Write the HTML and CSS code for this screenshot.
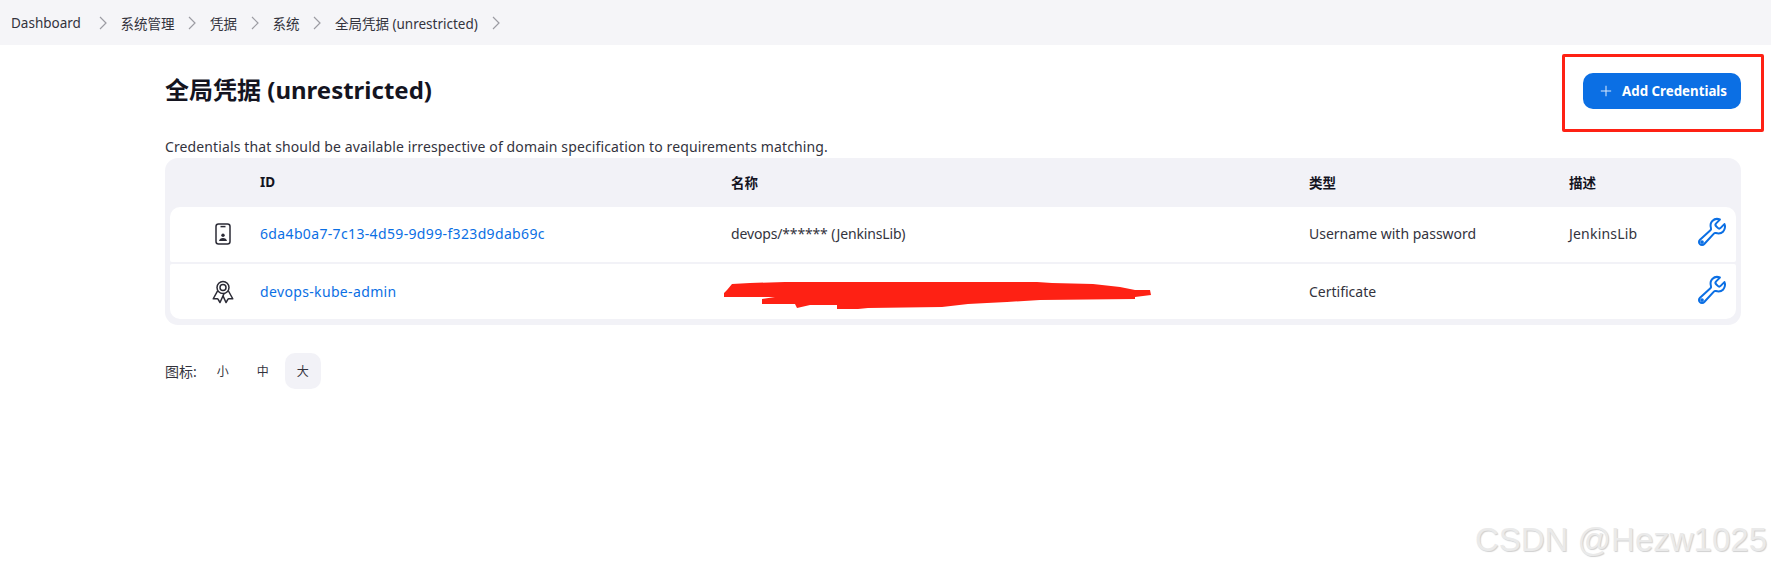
FILE: index.html
```html
<!DOCTYPE html>
<html lang="zh-CN">
<head>
    <meta charset="UTF-8">
    <meta name="viewport" content="width=device-width, initial-scale=1.0">
    <title>全局凭据 (unrestricted)</title>
    <link rel="stylesheet" href="styles.css">
</head>
<body>
    <nav class="breadcrumbs">
        <a class="crumb">Dashboard</a>
        <svg class="chevron" viewBox="0 0 10 16"><path d="M2 2l6 6-6 6"/></svg>
        <a class="crumb">系统管理</a>
        <svg class="chevron" viewBox="0 0 10 16"><path d="M2 2l6 6-6 6"/></svg>
        <a class="crumb">凭据</a>
        <svg class="chevron" viewBox="0 0 10 16"><path d="M2 2l6 6-6 6"/></svg>
        <a class="crumb">系统</a>
        <svg class="chevron" viewBox="0 0 10 16"><path d="M2 2l6 6-6 6"/></svg>
        <a class="crumb">全局凭据 (unrestricted)</a>
        <svg class="chevron" viewBox="0 0 10 16"><path d="M2 2l6 6-6 6"/></svg>
    </nav>

    <main class="content">
        <header class="page-header">
            <h1>全局凭据 (unrestricted)</h1>
            <button class="add-button">
                <svg class="plus" viewBox="0 0 14 14"><path d="M7 1v12M1 7h12"/></svg>
                Add Credentials
            </button>
        </header>

        <p class="description">Credentials that should be available irrespective of domain specification to requirements matching.</p>

        <div class="table">
            <div class="row head">
                <span></span>
                <span>ID</span>
                <span>名称</span>
                <span>类型</span>
                <span>描述</span>
                <span></span>
            </div>
            <div class="row body first">
                <span class="type-icon">
                    <svg class="phone" viewBox="0 0 16 22">
                        <rect x="1" y="1" width="14" height="20" rx="2.5"/>
                        <path d="M5.5 3.6h5"/>
                        <circle class="solid" cx="8" cy="12.2" r="1.7"/>
                        <path class="solid" d="M4 18c.3-2 2-3 4-3s3.700 1 4 3z"/>
                    </svg>
                </span>
                <a class="link">6da4b0a7-7c13-4d59-9d99-f323d9dab69c</a>
                <span class="masked">devops/****** (JenkinsLib)</span>
                <span>Username with password</span>
                <span class="note">JenkinsLib</span>
                <svg class="wrench" viewBox="0 0 512 512">
                    <path d="M393.87 190a32.100 32.100 0 01-45.250 0l-26.570-26.570a32.090 32.090 0 010-45.260L382.190 58a1 1 0 00-.3-1.640c-38.820-16.640-89.150-8.160-121.110 23.570-30.580 30.350-32.320 76-21.120 115.840a31.930 31.930 0 01-9.060 32.080L64 380a48.170 48.170 0 1068 68l153.860-167a31.930 31.930 0 0131.600-9.130c39.540 10.590 84.540 8.600 114.720-21.190 32.490-32 39.500-88.560 23.750-120.930a1 1 0 00-1.600-.26z"/>
                    <circle cx="96" cy="416" r="14"/>
                </svg>
            </div>
            <div class="row body last">
                <span class="type-icon">
                    <svg class="ribbon" viewBox="0 0 512 512">
                        <circle cx="256" cy="160" r="128"/>
                        <circle cx="256" cy="160" r="64"/>
                        <path d="M143.650 227.820L48 400l86.860-.42a16 16 0 0113.820 7.800L192 480l88.330-194.320"/>
                        <path d="M366.540 224L464 400l-86.860-.42a16 16 0 00-13.820 7.800L320 480l-64-140.800"/>
                    </svg>
                </span>
                <a class="link">devops-kube-admin</a>
                <span></span>
                <span>Certificate</span>
                <span></span>
                <svg class="wrench" viewBox="0 0 512 512">
                    <path d="M393.87 190a32.100 32.100 0 01-45.250 0l-26.570-26.570a32.090 32.090 0 010-45.260L382.190 58a1 1 0 00-.3-1.640c-38.820-16.640-89.150-8.160-121.110 23.570-30.580 30.350-32.320 76-21.120 115.840a31.930 31.930 0 01-9.060 32.080L64 380a48.170 48.170 0 1068 68l153.860-167a31.930 31.930 0 0131.600-9.130c39.540 10.590 84.540 8.600 114.720-21.190 32.490-32 39.500-88.560 23.750-120.930a1 1 0 00-1.600-.26z"/>
                    <circle cx="96" cy="416" r="14"/>
                </svg>
            </div>
        </div>

        <div class="icon-sizes">
            <span class="sizes-label">图标:</span>
            <a class="size">小</a>
            <a class="size">中</a>
            <a class="size active">大</a>
        </div>
    </main>

    <!-- annotations drawn over the screenshot -->
    <div class="red-box"></div>
    <svg class="scribble" viewBox="0 0 1771 570">
        <path d="M724 297L724 293 727 290 732 284 750 283 785 282 1037 282 1052 283 1093 284 1120 287 1135 290 1150 290 1151 295 1135 297 1135 299 1040 300 1007 302 987 303 968 304 942 307 868 308 858 309 837 309 837 305 810 305 797 308 795 304 762 304 762 299 775 297z"/>
    </svg>
    <div class="watermark">CSDN @Hezw1025</div>
</body>
</html>
```
FILE: styles.css
```css
* {
    box-sizing: border-box;
}
body {
    margin: 0;
    background: #fff;
    color: #14141f;
    font-family: "Noto Sans", "Noto Sans CJK SC", sans-serif;
    font-size: 14px;
}
.breadcrumbs {
    display: flex;
    align-items: center;
    height: 45px;
    padding-left: 11px;
    background: #f5f5f8;
    color: #33333d;
    font-size: 13.5px;
}
.crumb:first-child {
    margin-right: 4px;
}
.chevron {
    width: 10px;
    height: 16px;
    margin: 0 12.500px 0 13px;
    fill: none;
    stroke: #9c9ca3;
    stroke-width: 1.200;
}
.content {
    padding: 0 30px 0 165px;
}
.page-header {
    display: flex;
    justify-content: space-between;
    align-items: center;
    height: 92px;
}
h1 {
    margin: 0 0 6px;
    font-size: 24px;
    font-weight: 700;
    color: #14141f;
}
.add-button {
    display: flex;
    align-items: center;
    gap: 10px;
    height: 36px;
    padding: 0 14px 0 17px;
    border: none;
    border-radius: 10px;
    background: #0b6fe4;
    color: #fff;
    font: inherit;
    font-size: 13.300px;
    font-weight: 700;
}
.plus {
    width: 12px;
    height: 12px;
    fill: none;
    stroke: #dbe9fb;
    stroke-width: 1.200;
}
.description {
    margin: 0;
    height: 21px;
    line-height: 19px;
    color: #33333d;
    letter-spacing: 0.12px;
}
.table {
    padding: 0 5px 6px;
    border-radius: 13px;
    background: #f2f2f7;
}
.row {
    display: grid;
    grid-template-columns: 90px 471px 578px 260px 1fr 50px;
    align-items: center;
}
.head {
    height: 49px;
    padding-bottom: 2px;
    font-weight: 700;
    color: #14141f;
    font-size: 13.500px;
}
.body {
    height: 55px;
    background: #fff;
    color: #33333d;
}
.first {
    margin-bottom: 2px;
    padding-bottom: 2px;
    border-radius: 10px 10px 2px 2px;
}
.last {
    border-radius: 2px 2px 10px 10px;
}
.link {
    color: #0b6fe4;
    letter-spacing: 0.35px;
}
.masked {
    letter-spacing: -0.15px;
}
.note {
    letter-spacing: 0.2px;
}
.type-icon {
    display: flex;
    justify-content: center;
    padding-left: 16px;
}
.phone,
.ribbon {
    fill: none;
    stroke: #2b2b36;
}
.phone {
    width: 16px;
    height: 22px;
    stroke-width: 1.500;
}
.phone .solid {
    fill: #2b2b36;
    stroke: none;
}
.ribbon {
    width: 24px;
    height: 24px;
    stroke-width: 32;
    stroke-linejoin: round;
}
.wrench {
    justify-self: end;
    width: 32px;
    height: 32px;
    margin: 0 8px 3px 0;
    fill: none;
    stroke: #0b6fe4;
    stroke-width: 32;
}
.icon-sizes {
    display: flex;
    align-items: center;
    gap: 4px;
    margin-top: 28px;
    font-size: 12px;
    color: #33333d;
}
.sizes-label {
    margin-right: 4px;
    font-size: 14px;
}
.size {
    display: flex;
    align-items: center;
    justify-content: center;
    width: 36px;
    height: 36px;
    border-radius: 10px;
}
.size.active {
    background: #f2f2f7;
}
.red-box {
    position: absolute;
    left: 1562px;
    top: 54px;
    width: 202px;
    height: 78px;
    border: 3px solid #fe2114;
    border-radius: 2px;
}
.scribble {
    position: absolute;
    left: 0;
    top: 0;
    width: 1771px;
    height: 570px;
    fill: #fe2114;
    pointer-events: none;
}
.watermark {
    position: absolute;
    right: 4px;
    top: 521px;
    font-family: "Liberation Sans", sans-serif;
    font-size: 33px;
    color: #eaeaea;
    text-shadow: 1px 1px 1px #d0d0d0;
}
```
